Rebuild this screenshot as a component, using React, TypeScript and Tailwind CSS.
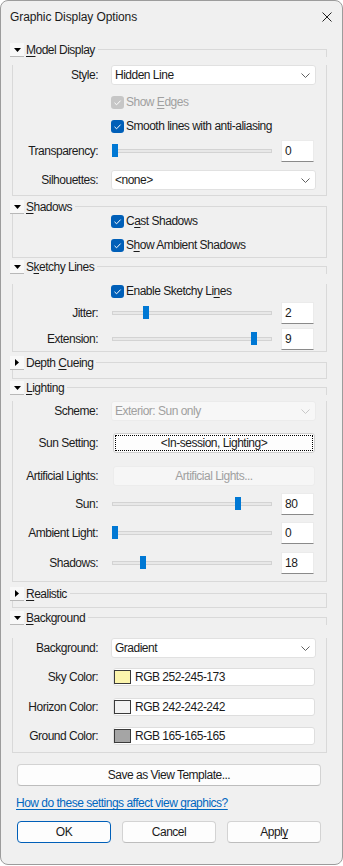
import React from 'react';

function Chevron({ disabled }: { disabled?: boolean }) {
  return (
    <svg width="9" height="5" viewBox="0 0 9 5" className="shrink-0">
      <path d="M0.5 0.5 L4.5 4.5 L8.5 0.5" fill="none" stroke={disabled ? '#c8c8c8' : '#606060'} strokeWidth="1" />
    </svg>
  );
}

function Expander({ open }: { open: boolean }) {
  return (
    <div className="w-[14px] h-[14px] shrink-0 flex items-center justify-center bg-[#f8f8f8] border-b border-[#b8b8b8]">
      {open ? (
        <svg width="7" height="4" viewBox="0 0 7 4">
          <path d="M0 0 H7 L3.5 4 Z" fill="#000" />
        </svg>
      ) : (
        <svg width="4" height="7" viewBox="0 0 4 7">
          <path d="M0 0 V7 L4 3.5 Z" fill="#000" />
        </svg>
      )}
    </div>
  );
}

function GroupHeader({ open, children, className }: { open: boolean; children: React.ReactNode; className: string }) {
  return (
    <div className={`flex h-[14px] items-center ${className}`}>
      <Expander open={open} />
      <span className="ml-[2px] leading-[14px] whitespace-nowrap">{children}</span>
      <div className="ml-[3px] flex-1 self-end h-[8px] border-t border-r border-[#d9d9d9]" />
    </div>
  );
}

function Row({ label, className, children }: { label: string; className: string; children: React.ReactNode }) {
  return (
    <div className={`flex items-center ${className}`}>
      <span className="w-[85px] text-right whitespace-nowrap">{label}</span>
      {children}
    </div>
  );
}

function Check({ children, disabled, className }: { children: React.ReactNode; disabled?: boolean; className: string }) {
  return (
    <div className={`flex items-center h-[14px] ml-[98px] ${className}`}>
      <div className={`w-[13px] h-[13px] rounded-[3px] flex items-center justify-center ${disabled ? 'bg-[#c6c6c6]' : 'bg-[#005fb8]'}`}>
        <svg width="13" height="13" viewBox="0 0 13 13">
          <path d="M3.5 6.8 L5.6 8.8 L9.6 4.6" fill="none" stroke="#fff" strokeWidth="1" />
        </svg>
      </div>
      <span className={`ml-[2px] whitespace-nowrap ${disabled ? 'text-[#a0a0a0]' : ''}`}>{children}</span>
    </div>
  );
}

function Select({ value, disabled }: { value: string; disabled?: boolean }) {
  return (
    <div
      className={`ml-[13px] w-[205px] h-[20px] border rounded-[3px] flex items-center justify-between pl-[3px] pr-[5px] ${
        disabled ? 'bg-[#f7f7f7] border-[#ebebeb] text-[#a0a0a0]' : 'bg-white border-[#e1e1e1]'
      }`}
    >
      <span>{value}</span>
      <Chevron disabled={disabled} />
    </div>
  );
}

function Slider({ label, value, max, className }: { label: string; value: number; max: number; className: string }) {
  const left = Math.round((value / max) * 154);
  return (
    <Row label={label} className={className}>
      <div className="relative ml-[14px] w-[160px] h-[22px] flex items-center">
        <div className="w-full h-[4px] bg-[#e8e8e8] border border-[#d3d3d3]" />
        <div className="absolute top-[4px] w-[6px] h-[13px] bg-[#0078d4]" style={{ left }} />
      </div>
      <div className="ml-[9px] w-[33px] h-[22px] bg-white border border-[#ebebeb] border-b-[#8a8a8a] pl-[3px] flex items-center">
        {value}
      </div>
    </Row>
  );
}

function ColorField({ label, rgb, swatch, className }: { label: string; rgb: string; swatch: string; className: string }) {
  return (
    <Row label={label} className={className}>
      <div className="ml-[15px] w-[202px] h-[18px] bg-white border border-[#dedede] rounded-[3px] flex items-center">
        <div className={`w-[17px] h-[14px] border border-[#3a3a3a] ${swatch}`} />
        <span className="ml-[4px]">{rgb}</span>
      </div>
    </Row>
  );
}

function Button({ children, primary }: { children: React.ReactNode; primary?: boolean }) {
  return (
    <div
      className={`w-[94px] h-[22px] rounded-[4px] flex items-center justify-center bg-[#fdfdfd] border ${
        primary ? 'border-[#005fb8]' : 'border-[#d3d3d3] border-b-[#bdbdbd]'
      }`}
    >
      {children}
    </div>
  );
}

export default function App() {
  return (
    <div className="w-[343px] h-[866px] bg-white font-['Liberation_Sans',Arial,sans-serif] text-[12px] leading-[16px] tracking-[-0.5px] text-[#1b1b1b]">
      <div className="h-[865px] rounded-[8px] border border-[#9c9c9c] bg-[#f0f0f0] overflow-hidden flex flex-col">
        {/* title bar */}
        <div className="h-[31px] flex items-center justify-between pl-[9px] pr-[10px]">
          <span className="tracking-[-0.1px]">Graphic Display Options</span>
          <svg width="10" height="10" viewBox="0 0 10 10">
            <path d="M0.5 0.5 L9.5 9.5 M9.5 0.5 L0.5 9.5" stroke="#222" strokeWidth="1" />
          </svg>
        </div>

        <div className="pl-[9px] pr-[15px]">
          {/* Model Display */}
          <GroupHeader open className="mt-[11px]">
            <u className="underline-offset-[2px]">M</u>odel Display
          </GroupHeader>
          <div className="ml-[2px] border-x border-b border-[#d9d9d9] pb-[5px]">
            <Row label="Style:" className="mt-[8px]">
              <Select value="Hidden Line" />
            </Row>
            <Check disabled className="mt-[10px]">
              Show <u className="underline-offset-[2px]">E</u>dges
            </Check>
            <Check className="mt-[10px]">Smooth lines with anti-aliasing</Check>
            <Slider label="Transparency:" value={0} max={100} className="mt-[7px]" />
            <Row label="Silhouettes:" className="mt-[8px]">
              <Select value="<none>" />
            </Row>
          </div>

          {/* Shadows */}
          <GroupHeader open className="mt-[4px]">
            <u className="underline-offset-[2px]">S</u>hadows
          </GroupHeader>
          <div className="ml-[2px] border-x border-b border-[#d9d9d9] pb-[5px]">
            <Check className="mt-0">
              C<u className="underline-offset-[2px]">a</u>st Shadows
            </Check>
            <Check className="mt-[10px]">
              S<u className="underline-offset-[2px]">h</u>ow Ambient Shadows
            </Check>
          </div>

          {/* Sketchy Lines */}
          <GroupHeader open className="mt-[2px]">
            S<u className="underline-offset-[2px]">k</u>etchy Lines
          </GroupHeader>
          <div className="ml-[2px] border-x border-b border-[#d9d9d9] pb-[1px]">
            <Check className="mt-[10px]">
              Enable Sketchy Li<u className="underline-offset-[2px]">n</u>es
            </Check>
            <Slider label="Jitter:" value={2} max={10} className="mt-[4px]" />
            <Slider label="Extension:" value={9} max={10} className="mt-[4px]" />
          </div>

          {/* Depth Cueing */}
          <GroupHeader open={false} className="mt-[4px]">
            Depth <u className="underline-offset-[2px]">C</u>ueing
          </GroupHeader>
          <div className="ml-[2px] h-[9px] border-x border-b border-[#d9d9d9]" />

          {/* Lighting */}
          <GroupHeader open className="mt-[2px]">
            <u className="underline-offset-[2px]">L</u>ighting
          </GroupHeader>
          <div className="ml-[2px] border-x border-b border-[#d9d9d9] pb-[7px]">
            <Row label="Scheme:" className="mt-[6px]">
              <Select value="Exterior: Sun only" disabled />
            </Row>
            <Row label="Sun Setting:" className="mt-[12px]">
              <div className="ml-[15px] w-[202px] h-[20px] bg-[#fdfdfd] border border-[#cfcfcf] rounded-[3px] p-[1px] flex">
                <div className="flex-1 border border-dotted border-black flex items-center justify-center">
                  &lt;In-session, Lighting&gt;
                </div>
              </div>
            </Row>
            <Row label="Artificial Lights:" className="mt-[13px]">
              <div className="ml-[15px] w-[202px] h-[20px] bg-[#f6f6f6] border border-[#ececec] rounded-[3px] flex items-center justify-center text-[#a0a0a0]">
                Artificial Lights...
              </div>
            </Row>
            <Slider label="Sun:" value={80} max={100} className="mt-[7px]" />
            <Slider label="Ambient Light:" value={0} max={100} className="mt-[7px]" />
            <Slider label="Shadows:" value={18} max={100} className="mt-[8px]" />
          </div>

          {/* Realistic */}
          <GroupHeader open={false} className="mt-[5px]">
            <u className="underline-offset-[2px]">R</u>ealistic
          </GroupHeader>
          <div className="ml-[2px] h-[7px] border-x border-b border-[#d9d9d9]" />

          {/* Background */}
          <GroupHeader open className="mt-[3px]">
            <u className="underline-offset-[2px]">B</u>ackground
          </GroupHeader>
          <div className="ml-[2px] border-x border-b border-[#d9d9d9] pb-[7px]">
            <Row label="Background:" className="mt-[13px]">
              <Select value="Gradient" />
            </Row>
            <ColorField label="Sky Color:" rgb="RGB 252-245-173" swatch="bg-[#fcf5ad]" className="mt-[10px]" />
            <ColorField label="Horizon Color:" rgb="RGB 242-242-242" swatch="bg-[#f2f2f2]" className="mt-[12px]" />
            <ColorField label="Ground Color:" rgb="RGB 165-165-165" swatch="bg-[#a5a5a5]" className="mt-[11px]" />
          </div>
        </div>

        {/* footer */}
        <div className="pl-[16px] pr-[21px]">
          <div className="mt-[11px] w-[304px] h-[22px] rounded-[4px] bg-[#fdfdfd] border border-[#d3d3d3] border-b-[#bdbdbd] flex items-center justify-center">
            Save as View Template...
          </div>
          <div className="mt-[9px] -ml-[1px] text-[#0067c0] underline underline-offset-[2px] whitespace-nowrap">
            How do these settings affect view graphics?
          </div>
          <div className="mt-[10px] flex gap-[11px]">
            <Button primary>OK</Button>
            <Button>Cancel</Button>
            <Button>
              Appl<u className="underline-offset-[2px]">y</u>
            </Button>
          </div>
        </div>
      </div>
    </div>
  );
}
